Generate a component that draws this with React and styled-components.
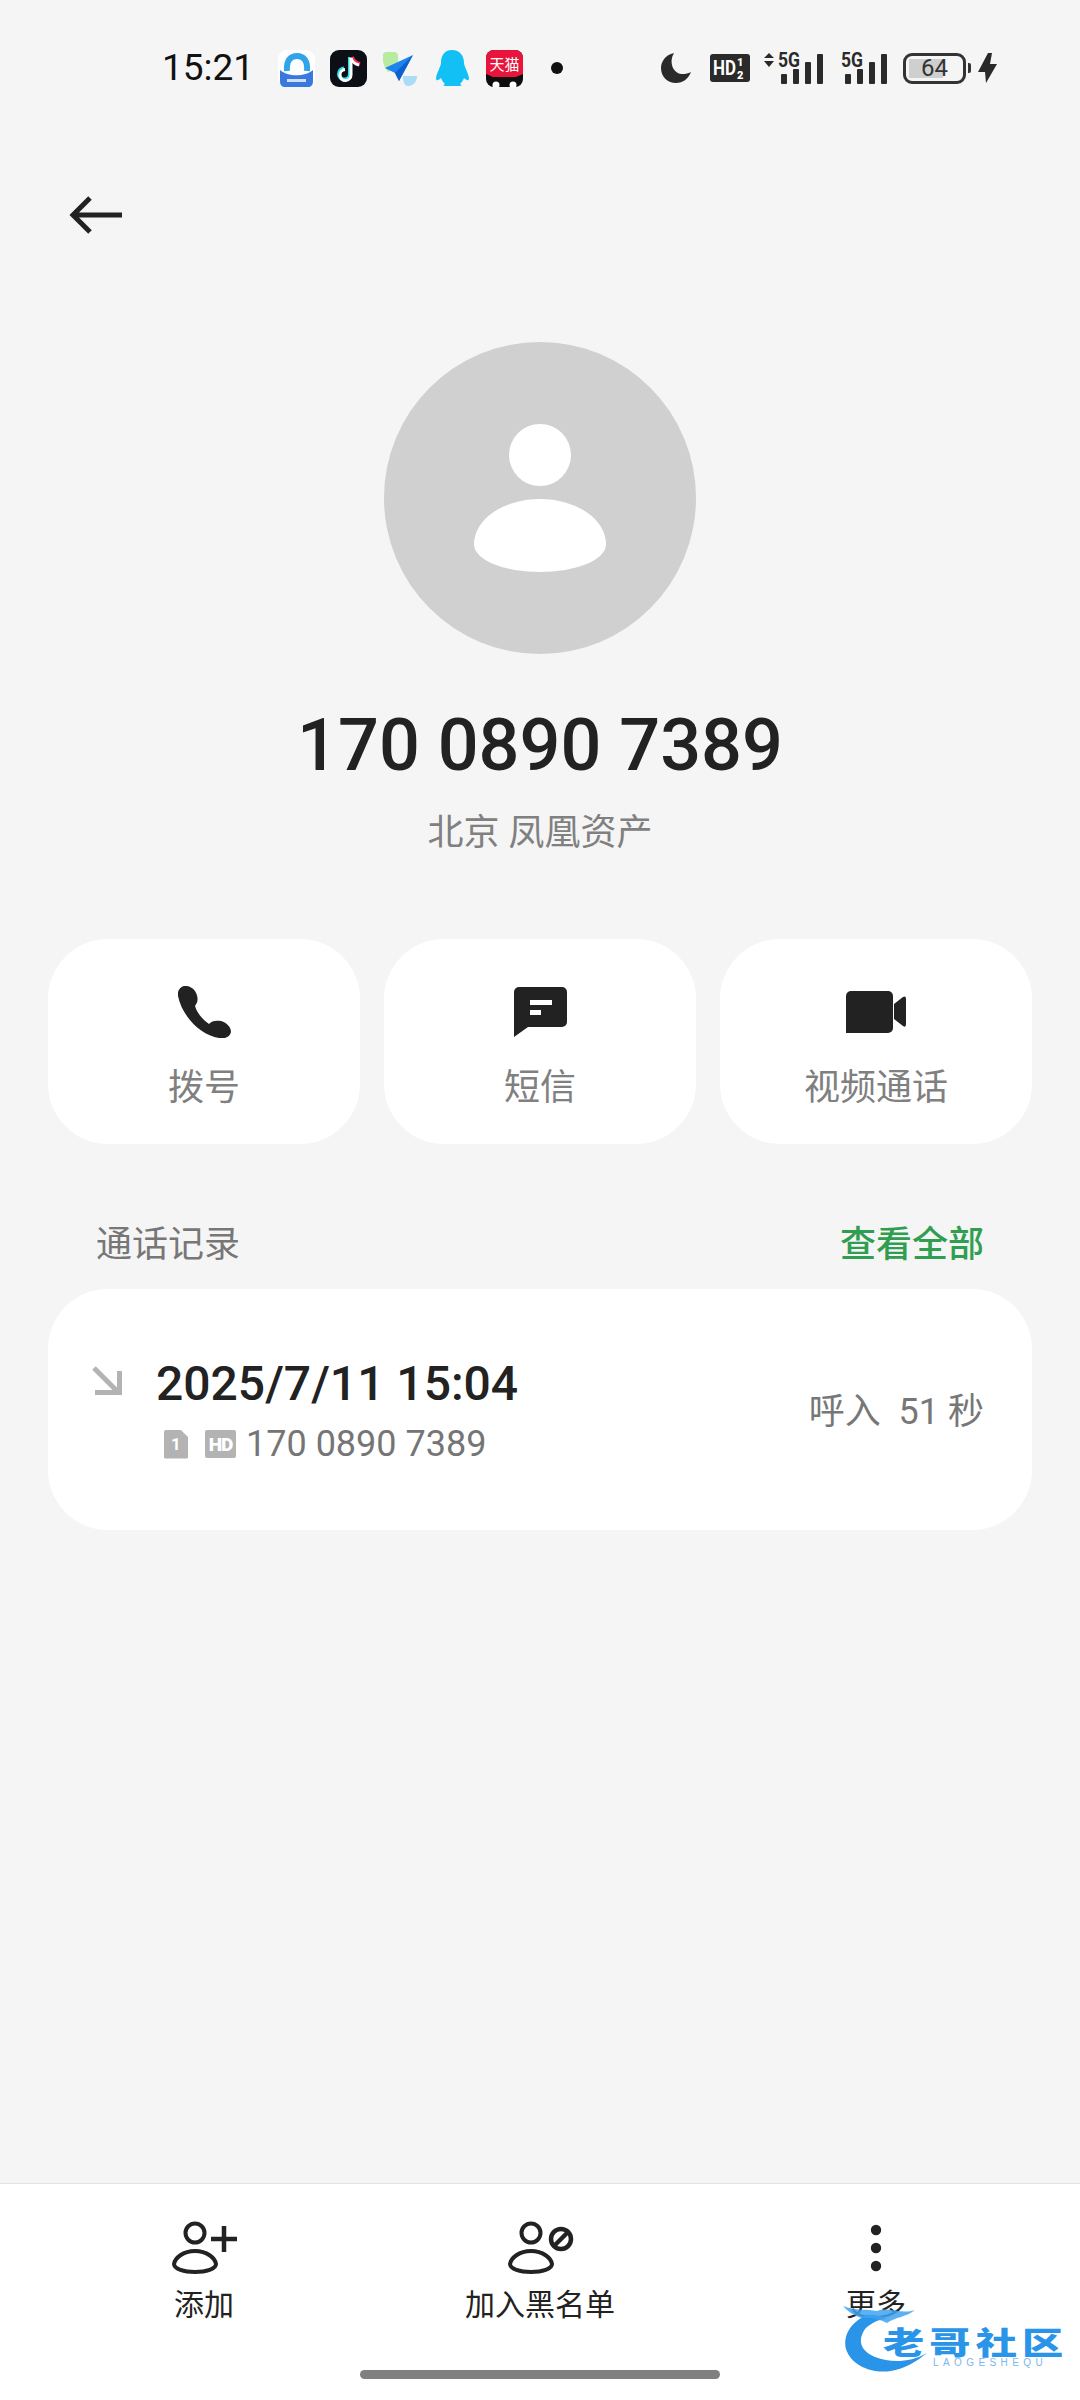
import React from 'react';
import styled, { createGlobalStyle } from 'styled-components';

const GlobalStyle = createGlobalStyle`
  html, body {
    margin: 0;
    padding: 0;
    background: #f5f5f5;
  }
  * {
    box-sizing: border-box;
  }
`;

const Page = styled.div`
  position: relative;
  width: 1080px;
  height: 2400px;
  overflow: hidden;
  display: flex;
  flex-direction: column;
  background: #f5f5f5;
  font-family: Roboto, "Noto Sans CJK SC", sans-serif;
  color: #222;
`;

const StatusBar = styled.div`
  height: 136px;
  flex: none;
  display: flex;
  align-items: center;
  justify-content: space-between;
  padding: 0 83px 0 162px;
`;

const StatusLeft = styled.div`
  display: flex;
  align-items: center;
`;

const StatusRight = styled.div`
  display: flex;
  align-items: center;
`;

const Time = styled.span`
  width: 116px;
  font-size: 37px;
  line-height: 40px;
  color: #111;
`;

const AppIcon = styled.svg`
  display: block;
  flex: none;
  width: 37px;
  height: 37px;
  margin-right: ${(p) => p.$gap ?? 15}px;
`;

const NotifyDot = styled.span`
  width: 12px;
  height: 12px;
  margin-left: 28px;
  border-radius: 50%;
  background: #111;
`;

const SysIcon = styled.svg`
  display: block;
  flex: none;
  overflow: visible;
  margin-left: ${(p) => p.$gap || 0}px;
`;

const BatteryBox = styled.div`
  position: relative;
  width: 63px;
  height: 31px;
  margin-left: 16px;
  border: 3px solid #333;
  border-radius: 9px;
  display: flex;
  align-items: center;
  justify-content: center;
  font-size: 24px;
  line-height: 25px;
  color: #333;
  background: linear-gradient(90deg, #cfcfcf 0, #cfcfcf 34px, transparent 34px) no-repeat 3px 3px / calc(100% - 6px) calc(100% - 6px);
`;

const BatteryTip = styled.span`
  width: 3px;
  height: 10px;
  margin-left: 2px;
  background: #333;
  border-radius: 0 2px 2px 0;
`;

const Nav = styled.div`
  height: 157px;
  flex: none;
  display: flex;
  align-items: center;
  padding-left: 68px;
`;

const BackIcon = styled.svg`
  display: block;
  width: 56px;
  height: 44px;
`;

const Profile = styled.div`
  flex: none;
  margin-top: 49px;
  display: flex;
  flex-direction: column;
  align-items: center;
`;

const Avatar = styled.div`
  width: 312px;
  height: 312px;
  border-radius: 50%;
  background: #d0d0d0;
  display: flex;
  flex-direction: column;
  align-items: center;
  padding-top: 82px;
`;

const AvatarHead = styled.span`
  width: 62px;
  height: 62px;
  border-radius: 50%;
  background: #fff;
`;

const AvatarBody = styled.span`
  width: 132px;
  height: 73px;
  margin-top: 13px;
  border-radius: 50% 50% 50% 50% / 62% 62% 38% 38%;
  background: #fff;
`;

const Phone = styled.div`
  margin-top: 50px;
  font-size: 72px;
  line-height: 84px;
  font-weight: 500;
  color: #222;
`;

const Location = styled.div`
  margin-top: 20px;
  font-size: 36px;
  line-height: 50px;
  font-weight: 400;
  color: #808080;
`;

const Actions = styled.div`
  flex: none;
  margin-top: 81px;
  padding: 0 48px;
  display: grid;
  grid-template-columns: repeat(3, 312px);
  gap: 24px;
`;

const ActionCard = styled.div`
  height: 205px;
  border-radius: 60px;
  background: #fff;
  display: flex;
  flex-direction: column;
  align-items: center;
`;

const ActionIconSlot = styled.div`
  height: 56px;
  margin-top: 45px;
  display: flex;
  align-items: center;
  justify-content: center;
`;

const ActionLabel = styled.div`
  margin-top: 23px;
  font-size: 36px;
  line-height: 50px;
  font-weight: 400;
  color: #808080;
`;

const SectionHead = styled.div`
  flex: none;
  margin-top: 76px;
  padding: 0 96px;
  display: flex;
  justify-content: space-between;
  font-size: 36px;
  line-height: 50px;
`;

const SectionTitle = styled.span`
  font-weight: 400;
  color: #777;
`;

const SectionLink = styled.span`
  font-weight: 500;
  color: #2f9e50;
`;

const RecordCard = styled.div`
  flex: none;
  height: 241px;
  margin: 19px 48px 0;
  border-radius: 60px;
  background: #fff;
  display: flex;
  padding: 0 48px 0 44px;
`;

const RecordArrow = styled.svg`
  display: block;
  flex: none;
  width: 31px;
  height: 31px;
  margin-top: 77px;
`;

const RecordMain = styled.div`
  flex: 1;
  padding: 63px 0 0 33px;
`;

const RecordDate = styled.div`
  font-size: 48px;
  line-height: 64px;
  font-weight: 500;
  color: #222;
`;

const RecordSub = styled.div`
  display: flex;
  align-items: center;
  margin-top: 3px;
  padding-left: 8px;
  font-size: 36px;
  line-height: 50px;
  color: #757575;
`;

const SimBadge = styled.span`
  width: 24px;
  height: 29px;
  margin-right: 17px;
  display: flex;
  align-items: center;
  justify-content: center;
  clip-path: polygon(0 0, 68% 0, 100% 26%, 100% 100%, 0 100%);
  border-radius: 2px;
  background: #b3b3b3;
  color: #fff;
  font-size: 17px;
  font-weight: 700;
  line-height: 1;
`;

const HdBadge = styled.span`
  width: 31px;
  height: 28px;
  margin-right: 10px;
  display: flex;
  align-items: center;
  justify-content: center;
  border-radius: 2px;
  background: #b3b3b3;
  color: #fff;
  font-size: 19px;
  font-weight: 900;
  line-height: 1;
  letter-spacing: -1px;
`;

const RecordInfo = styled.div`
  align-self: center;
  padding-top: 4px;
  font-size: 36px;
  line-height: 50px;
  color: #777;
  white-space: pre;
`;

const BottomBar = styled.div`
  margin-top: auto;
  height: 217px;
  flex: none;
  padding: 0 36px;
  display: grid;
  grid-template-columns: repeat(3, 1fr);
  border-top: 1px solid #e2e2e2;
  background: #fff;
`;

const BottomItem = styled.div`
  display: flex;
  flex-direction: column;
  align-items: center;
`;

const BottomIcon = styled.svg`
  display: block;
  margin-top: 34px;
  width: 72px;
  height: 60px;
`;

const BottomLabel = styled.div`
  margin-top: 5px;
  font-size: 30px;
  line-height: 44px;
  color: #222;
`;

const HomeBar = styled.div`
  position: absolute;
  left: 360px;
  bottom: 21px;
  width: 360px;
  height: 9px;
  border-radius: 5px;
  background: #808080;
`;

const Watermark = styled.div`
  position: absolute;
  left: 843px;
  top: 2303px;
  width: 225px;
  height: 72px;
`;

const WatermarkSwoosh = styled.svg`
  position: absolute;
  left: 0;
  top: 0;
  width: 90px;
  height: 72px;
`;

const WatermarkTitle = styled.div`
  position: absolute;
  left: 40px;
  top: 15px;
  font-family: "Noto Sans CJK SC", sans-serif;
  font-size: 40px;
  line-height: 46px;
  font-weight: 900;
  letter-spacing: 5px;
  white-space: nowrap;
  color: #2a95e8;
  transform: scale(1.03, 0.76);
  transform-origin: left center;
`;

const WatermarkSub = styled.div`
  position: absolute;
  left: 90px;
  top: 55px;
  font-family: "Liberation Sans", sans-serif;
  font-size: 10px;
  line-height: 10px;
  letter-spacing: 4.4px;
  white-space: nowrap;
  color: #7cb8ea;
`;

function SignalBars() {
  return (
    <>
      <rect x="0" y="20" width="6" height="10" rx="1" />
      <rect x="12" y="15" width="6" height="15" rx="1" />
      <rect x="24" y="8" width="6" height="22" rx="1" />
      <rect x="36" y="0" width="6" height="30" rx="1" />
    </>
  );
}

function StatusIcons() {
  return (
    <StatusRight>
      <SysIcon width="30" height="30" viewBox="0 0 30 30">
        <path d="M13 0 C4 2 0 9 0 15 C0 24 7 30 15 30 C22 30 27 26 30 19 C22 23 15 21 12 15 C10 10 10 5 13 0Z" fill="#2a2a2a" />
      </SysIcon>
      <SysIcon width="40" height="28" viewBox="0 0 40 28" $gap={19}>
        <rect width="40" height="28" rx="3" fill="#2a2a2a" />
        <text x="3" y="21" fontFamily="Roboto" fontSize="21" fontWeight="700" fill="#fff" textLength="23" lengthAdjust="spacingAndGlyphs">HD</text>
        <text x="27" y="12" fontFamily="Roboto" fontSize="11" fontWeight="900" fill="#fff">1</text>
        <text x="27" y="25" fontFamily="Roboto" fontSize="11" fontWeight="900" fill="#fff">2</text>
      </SysIcon>
      <SysIcon width="60" height="34" viewBox="0 0 60 34" $gap={14} fill="#2a2a2a">
        <path d="M5 0 L10 5 H0Z M5 14 L10 8 H0Z" transform="translate(0 2)" />
        <text x="14" y="16" fontFamily="Roboto" fontSize="21" fontWeight="700" textLength="22" lengthAdjust="spacingAndGlyphs">5G</text>
        <g transform="translate(17 3)"><SignalBars /></g>
      </SysIcon>
      <SysIcon width="46" height="34" viewBox="0 0 46 34" $gap={17} fill="#2a2a2a">
        <text x="0" y="16" fontFamily="Roboto" fontSize="21" fontWeight="700" textLength="22" lengthAdjust="spacingAndGlyphs">5G</text>
        <g transform="translate(4 3)"><SignalBars /></g>
      </SysIcon>
      <BatteryBox>64</BatteryBox>
      <BatteryTip />
      <SysIcon width="19" height="30" viewBox="0 0 19 30" $gap={7}>
        <path d="M10 0 L0 19 H7 L8 30 L19 11 H12 L14 0Z" fill="#2a2a2a" />
      </SysIcon>
    </StatusRight>
  );
}

export default function App() {
  return (
    <Page>
      <GlobalStyle />
      <StatusBar>
        <StatusLeft>
          <Time>15:21</Time>
          <AppIcon viewBox="0 0 37 37">
            <rect width="37" height="37" rx="9" fill="#fff" />
            <path d="M9 21 C8 10 13 6 19 6 C25 6 30 10 29 21" fill="none" stroke="#2fa4ea" strokeWidth="6" />
            <path d="M2 20 C10 27 27 27 35 20 V31 C35 35 33 37 30 37 H7 C4 37 2 35 2 31Z" fill="#3a78e0" />
            <rect x="9" y="29" width="19" height="3" fill="#cfe0fa" />
          </AppIcon>
          <AppIcon viewBox="0 0 37 37">
            <rect width="37" height="37" rx="9" fill="#0d0f17" />
            <path d="M20 7 V24 A5.5 5.5 0 1 1 14 18.5" fill="none" stroke="#25e0e6" strokeWidth="4" />
            <path d="M22 7 C23 11 26 13 30 14" fill="none" stroke="#fe2c55" strokeWidth="4" />
            <path d="M21 8 V25 A5.5 5.5 0 1 1 15 19.5" fill="none" stroke="#fff" strokeWidth="3" />
            <path d="M21 8 C22 12 25 14 29 15" fill="none" stroke="#fff" strokeWidth="3" />
          </AppIcon>
          <AppIcon viewBox="0 0 37 37">
            <path d="M3 2 H12 C15 2 16 4 16 6 V18 L6 22 C3 18 1 14 1 10 V4Z" fill="#b6eba0" />
            <path d="M21 26 H35 C35 32 31 36 26 36 C23 36 21 33 21 26Z" fill="#a9dcf7" />
            <path d="M31 5 L3 18 L13 23 L17 31 Z" fill="#1b84ef" />
            <path d="M13 23 L31 5 L17 31Z" fill="#0f5fcf" />
          </AppIcon>
          <AppIcon viewBox="0 0 37 37">
            <path d="M18 0 C10 0 7 6 7 13 C7 16 3 22 2 28 C2 32 5 30 7 28 C8 31 10 33 11 34 C9 35 9 36 12 36 H25 C28 36 28 35 26 34 C27 33 29 31 30 28 C32 30 35 32 35 28 C34 22 30 16 30 13 C30 6 26 0 18 0Z" fill="#12c0f5" />
          </AppIcon>
          <AppIcon viewBox="0 0 37 37" $gap={0}>
            <rect width="37" height="37" rx="8" fill="#0e0e0e" />
            <path d="M0 8 A8 8 0 0 1 8 0 H29 A8 8 0 0 1 37 8 V24 L30 27 H7 L0 24Z" fill="#e8143c" />
            <text x="18.5" y="20" textAnchor="middle" fontFamily="'Noto Sans CJK SC'" fontSize="15" fill="#fff">天猫</text>
            <circle cx="10" cy="35" r="3.5" fill="#fff" />
            <circle cx="27" cy="35" r="3.5" fill="#fff" />
          </AppIcon>
          <NotifyDot />
        </StatusLeft>
        <StatusIcons />
      </StatusBar>

      <Nav>
        <BackIcon viewBox="0 0 56 44">
          <path d="M54 22 H5 M22 5 L5 22 L22 39" fill="none" stroke="#222" strokeWidth="5" />
        </BackIcon>
      </Nav>

      <Profile>
        <Avatar>
          <AvatarHead />
          <AvatarBody />
        </Avatar>
        <Phone>170 0890 7389</Phone>
        <Location>北京 凤凰资产</Location>
      </Profile>

      <Actions>
        <ActionCard>
          <ActionIconSlot>
            <svg width="53" height="52" viewBox="0 0 53 52">
              <path d="M6 0 C13 -1 19 5 19.5 12 C20 16 18 18 17 20 C19 27 25 34 31 38 C33 35 38 34 43 35 C49 37 53 41 53 46 C52 51 47 53 41 52 C22 49 4 30 0 10 C-1 5 2 1 6 0Z" fill="#222" />
            </svg>
          </ActionIconSlot>
          <ActionLabel>拨号</ActionLabel>
        </ActionCard>
        <ActionCard>
          <ActionIconSlot>
            <svg width="53" height="50" viewBox="0 0 53 50">
              <path d="M5 0 H48 A5 5 0 0 1 53 5 V35 A5 5 0 0 1 48 40 H14 L0 50 V5 A5 5 0 0 1 5 0Z" fill="#222" />
              <rect x="16" y="13" width="22" height="5" fill="#fff" />
              <rect x="16" y="23" width="11" height="5" fill="#fff" />
            </svg>
          </ActionIconSlot>
          <ActionLabel>短信</ActionLabel>
        </ActionCard>
        <ActionCard>
          <ActionIconSlot>
            <svg width="60" height="42" viewBox="0 0 60 42">
              <path d="M5 0 H42 A5 5 0 0 1 47 5 V37 A5 5 0 0 1 42 42 H0 V5 A5 5 0 0 1 5 0Z" fill="#222" />
              <path d="M48 13 L57 6 Q60 4.5 60 8 V33 Q60 37 57 35 L48 28Z" fill="#222" />
            </svg>
          </ActionIconSlot>
          <ActionLabel>视频通话</ActionLabel>
        </ActionCard>
      </Actions>

      <SectionHead>
        <SectionTitle>通话记录</SectionTitle>
        <SectionLink>查看全部</SectionLink>
      </SectionHead>

      <RecordCard>
        <RecordArrow viewBox="0 0 31 31">
          <path d="M2 2 L25 25 M3 26.5 H27.5 V5" fill="none" stroke="#b3b3b3" strokeWidth="5" />
        </RecordArrow>
        <RecordMain>
          <RecordDate>2025/7/11 15:04</RecordDate>
          <RecordSub>
            <SimBadge>1</SimBadge>
            <HdBadge>HD</HdBadge>
            170 0890 7389
          </RecordSub>
        </RecordMain>
        <RecordInfo>呼入  51 秒</RecordInfo>
      </RecordCard>

      <BottomBar>
        <BottomItem>
          <BottomIcon viewBox="0 0 72 60">
            <circle cx="27" cy="15" r="9.5" fill="none" stroke="#222" strokeWidth="4" />
            <path d="M27 33 C15 33 7 40 6 46 C6 51 16 54 27 54 C38 54 48 51 48 46 C47 40 39 33 27 33Z" fill="none" stroke="#222" strokeWidth="4" />
            <path d="M43 21 H69 M56 8 V34" fill="none" stroke="#222" strokeWidth="4.5" />
          </BottomIcon>
          <BottomLabel>添加</BottomLabel>
        </BottomItem>
        <BottomItem>
          <BottomIcon viewBox="0 0 72 60">
            <circle cx="27" cy="15" r="9.5" fill="none" stroke="#222" strokeWidth="4" />
            <path d="M27 33 C15 33 7 40 6 46 C6 51 16 54 27 54 C38 54 48 51 48 46 C47 40 39 33 27 33Z" fill="none" stroke="#222" strokeWidth="4" />
            <circle cx="57" cy="21" r="10" fill="none" stroke="#222" strokeWidth="4.5" />
            <path d="M51 27 L63 15" fill="none" stroke="#222" strokeWidth="4.5" />
          </BottomIcon>
          <BottomLabel>加入黑名单</BottomLabel>
        </BottomItem>
        <BottomItem>
          <BottomIcon viewBox="0 0 72 60">
            <circle cx="36" cy="12" r="5.2" fill="#222" />
            <circle cx="36" cy="30" r="5.2" fill="#222" />
            <circle cx="36" cy="48" r="5.2" fill="#222" />
          </BottomIcon>
          <BottomLabel>更多</BottomLabel>
        </BottomItem>
      </BottomBar>

      <HomeBar />

      <Watermark>
        <WatermarkSwoosh viewBox="0 0 90 72">
          <path d="M24 12 C6 20 0 34 3 46 C8 62 28 71 48 68 C60 66 72 60 84 50 C66 60 48 60 32 54 C18 48 14 38 22 26 C28 20 36 16 44 16 C36 12 30 11 24 12Z" fill="#2a95e8" />
          <path d="M0 3 C12 8 24 6 34 8 C46 3 58 12 72 7 C64 14 52 14 44 20 C36 16 28 14 18 15 C10 12 4 8 0 3Z" fill="#3ea3ee" fillOpacity="0.85" />
        </WatermarkSwoosh>
        <WatermarkTitle>老哥社区</WatermarkTitle>
        <WatermarkSub>LAOGESHEQU</WatermarkSub>
      </Watermark>
    </Page>
  );
}
